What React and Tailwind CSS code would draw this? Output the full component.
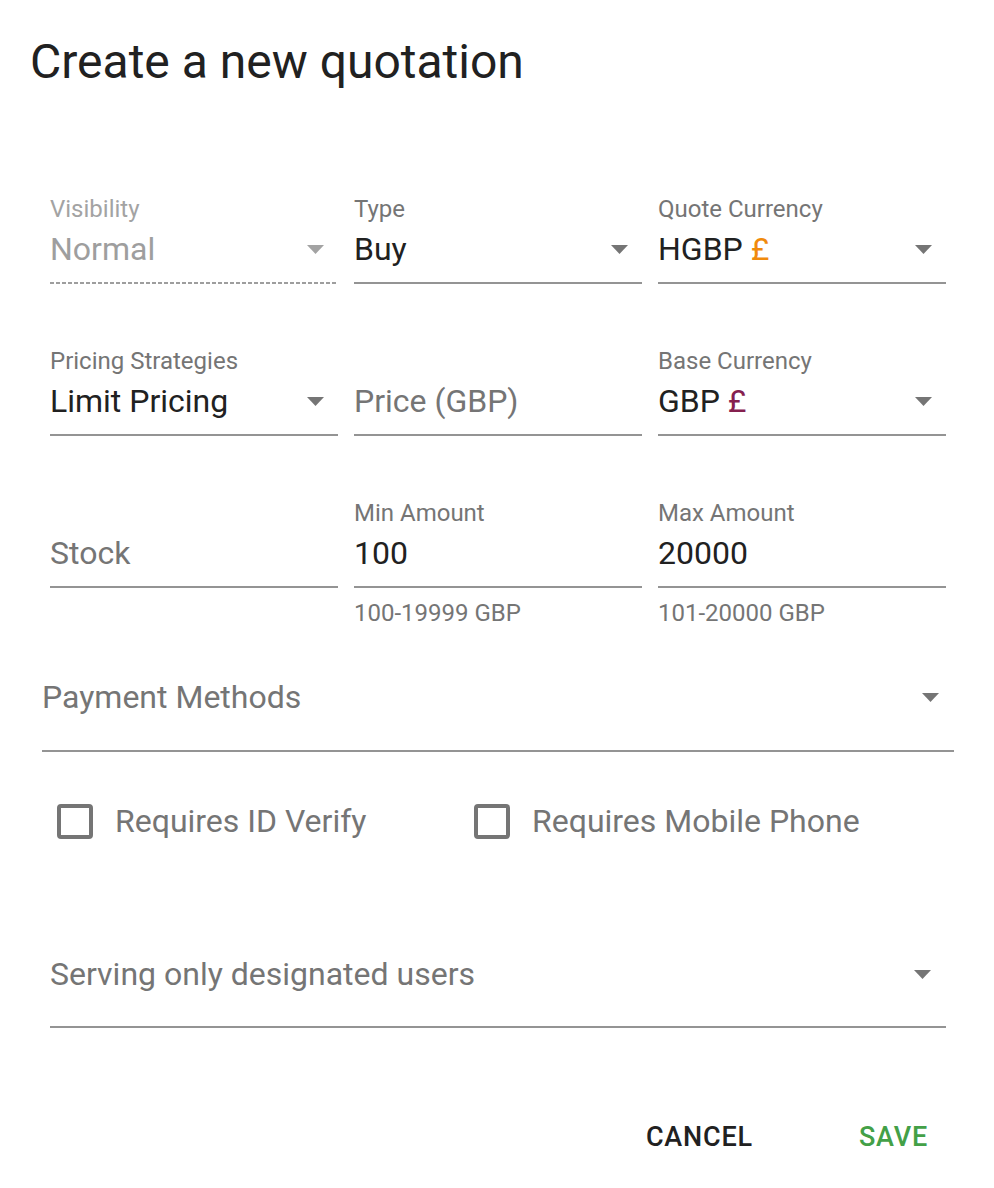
import React from "react";

const Arrow = ({ className = "" }) => (
  <svg width="17" height="9" viewBox="0 0 17 9" className={className}>
    <path d="M0 0 L17 0 L8.5 9 Z" fill="currentColor" />
  </svg>
);

const Field = ({ label, value, suffix, select, disabled, placeholder, helper }) => (
  <div className="flex flex-col">
    <div
      className={`h-[30px] leading-[30px] text-[24px] ${
        disabled ? "text-[#a3a3a3]" : "text-[#757575]"
      }`}
    >
      {label}
    </div>
    <div className="h-[50px] flex items-center justify-between pr-[14px]">
      <span
        className={`text-[32px] ${
          disabled
            ? "text-[#9e9e9e]"
            : placeholder
            ? "text-[#757575]"
            : "text-[#212121]"
        }`}
      >
        {value || placeholder}
        {suffix}
      </span>
      {select && (
        <Arrow className={disabled ? "text-[#a3a3a3]" : "text-[#757575]"} />
      )}
    </div>
    {disabled ? (
      <div className="mt-[8px] h-[2px] bg-[linear-gradient(to_right,#9e9e9e_65%,transparent_65%)] bg-[length:6px_2px]" />
    ) : (
      <div className="mt-[8px] h-[2px] bg-[#949494]" />
    )}
    {helper && (
      <div className="mt-[12px] h-[26px] leading-[26px] text-[24px] text-[#757575]">
        {helper}
      </div>
    )}
  </div>
);

const Checkbox = ({ label, className = "" }) => (
  <div className={`flex items-center ${className}`}>
    <div className="w-[36px] h-[35px] border-[4px] border-[#757575] rounded-[4px]" />
    <span className="ml-[22px] text-[32px] text-[#757575]">{label}</span>
  </div>
);

export default function App() {
  return (
    <div className="w-[994px] min-h-[1188px] bg-white font-['Roboto',sans-serif]">
      <h2 className="pt-[30px] pl-[30px] h-[194px] text-[48px] leading-[64px] text-[#212121]">
        Create a new quotation
      </h2>

      <div className="pl-[50px] w-[946px] grid grid-cols-3 gap-x-[16px]">
        <Field label="Visibility" value="Normal" select disabled />
        <Field label="Type" value="Buy" select />
        <Field
          label="Quote Currency"
          value="HGBP"
          suffix={<span className="text-[#f08a0c]"> £</span>}
          select
        />
      </div>

      <div className="pl-[50px] w-[946px] grid grid-cols-3 gap-x-[16px] mt-[62px]">
        <Field label="Pricing Strategies" value="Limit Pricing" select />
        <Field label="" placeholder="Price (GBP)" />
        <Field
          label="Base Currency"
          value="GBP"
          suffix={<span className="text-[#85204f]"> £</span>}
          select
        />
      </div>

      <div className="pl-[50px] w-[946px] grid grid-cols-3 gap-x-[16px] mt-[62px]">
        <Field label="" placeholder="Stock" />
        <Field label="Min Amount" value="100" helper="100-19999 GBP" />
        <Field label="Max Amount" value="20000" helper="101-20000 GBP" />
      </div>

      <div className="ml-[42px] w-[912px] mt-[41px]">
        <div className="h-[60px] flex items-center justify-between pr-[15px]">
          <span className="text-[32px] text-[#757575]">Payment Methods</span>
          <Arrow className="text-[#757575]" />
        </div>
        <div className="mt-[23px] h-[2px] bg-[#949494]" />
      </div>

      <div className="ml-[57px] mt-[45px] flex">
        <Checkbox label="Requires ID Verify" className="w-[417px]" />
        <Checkbox label="Requires Mobile Phone" />
      </div>

      <div className="ml-[50px] w-[896px] mt-[99px]">
        <div className="h-[60px] flex items-center justify-between pr-[15px]">
          <span className="text-[32px] text-[#757575]">
            Serving only designated users
          </span>
          <Arrow className="text-[#757575]" />
        </div>
        <div className="mt-[22px] h-[2px] bg-[#949494]" />
      </div>

      <div className="flex justify-end items-center mt-[89px] pr-[66px] gap-[106px]">
        <button className="text-[27px] font-medium tracking-[0.03em] text-[#212121]">
          CANCEL
        </button>
        <button className="text-[27px] font-medium tracking-[0.03em] text-[#43a047]">
          SAVE
        </button>
      </div>
    </div>
  );
}
